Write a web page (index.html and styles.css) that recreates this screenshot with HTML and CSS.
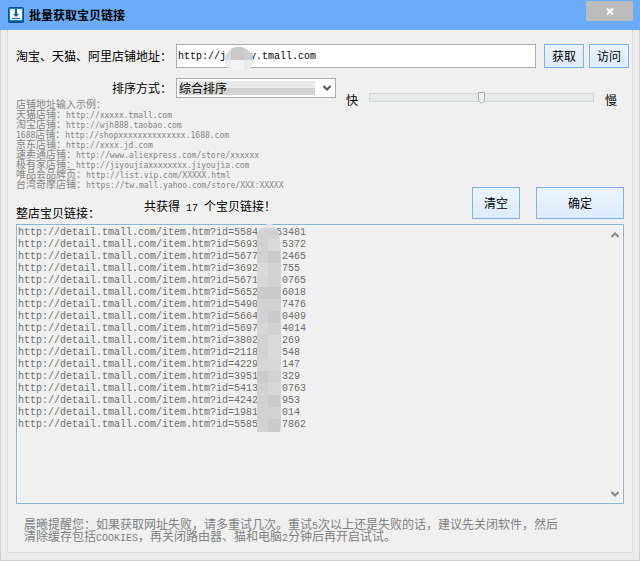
FILE: index.html
```html
<!DOCTYPE html>
<html lang="zh-CN">
<head>
<meta charset="utf-8">
<title>批量获取宝贝链接</title>
<link rel="stylesheet" href="styles.css">
</head>
<body>
<div class="window">
  <header class="titlebar">
    <svg class="logo" viewBox="0 0 16 16" aria-hidden="true">
      <rect width="16" height="16" rx="2" fill="#0b4f92"/>
      <rect x="1" y="1" width="14" height="13" rx="1" fill="#1a7fcb"/>
      <rect x="2" y="2" width="12" height="11" rx="1" fill="#f4fafd"/>
      <path d="M7 2h2v5h2l-3 3-3-3h2z" fill="#0d5ea6"/>
      <path d="M4 11h8v1H4z" fill="#0d5ea6"/>
    </svg>
    <h1 class="title">批量获取宝贝链接</h1>
    <button class="close" type="button" aria-label="关闭">
      <svg viewBox="0 0 8 7" width="8" height="7" aria-hidden="true"><path d="M1 0.5l6 6M7 0.5l-6 6" stroke="#fff" stroke-width="2"/></svg>
    </button>
  </header>

  <main class="panel">
    <div class="row address">
      <label class="field-label" for="shop">淘宝、天猫、阿里店铺地址：</label>
      <div class="shop-box">
        <input class="shop mono" id="shop" type="text" value="http://j    y.tmall.com">
        <svg class="mask-round" viewBox="0 0 28 25" width="28" height="25" aria-hidden="true">
          <ellipse cx="14" cy="12.5" rx="14" ry="12.5" fill="#dadada"/>
          <path d="M6 2Q14 -2 19 1V13H6z" fill="#c9c9c9"/>
          <path d="M19 1Q27 5 28 13H19z" fill="#cfcfcf"/>
          <path d="M0 13H28Q27 25 14 25T0 13z" fill="#ececec"/>
          <path d="M6 13h13v11q-7 2-13-1z" fill="#f3f3f3"/>
        </svg>
      </div>
      <button class="btn small" type="button">获取</button>
      <button class="btn small" type="button">访问</button>
    </div>

    <div class="middle">
      <div class="left">
        <div class="row">
          <label class="field-label" for="sort">排序方式：</label>
          <div class="sort-box">
            <select class="sort" id="sort"><option>综合排序</option></select>
            <svg class="sort-arrow" viewBox="0 0 8 6" width="8" height="6" aria-hidden="true"><path d="M0.5 1L4 4.5 7.5 1" fill="none" stroke="#555" stroke-width="2"/></svg>
          </div>
        </div>
        <div class="hints">
          <div>店铺地址输入示例：</div>
          <div>天猫店铺：<span class="mono">http://xxxxx.tmall.com</span></div>
          <div>淘宝店铺：<span class="mono">http://wjh888.taobao.com</span></div>
          <div><span class="mono">1688</span>店铺：<span class="mono">http://shopxxxxxxxxxxxxxx.1688.com</span></div>
          <div>京东店铺：<span class="mono">http://xxxx.jd.com</span></div>
          <div>速卖通店铺：<span class="mono">http://www.aliexpress.com/store/xxxxxx</span></div>
          <div>极有家店铺：<span class="mono">http://jiyoujiaxxxxxxxx.jiyoujia.com</span></div>
          <div>唯品会品牌页：<span class="mono">http://list.vip.com/XXXXX.html</span></div>
          <div>台湾奇摩店铺：<span class="mono">https://tw.mall.yahoo.com/store/XXX:XXXXX</span></div>
        </div>
        <div class="summary">
          <label class="list-label" for="links">整店宝贝链接：</label>
          <output class="count">共获得<span class="mono"> 17 </span>个宝贝链接！</output>
        </div>
      </div>

      <div class="right">
        <div class="speed">
          <span>快</span>
          <input class="slider" type="range" min="0" max="100" value="50" aria-label="速度">
          <span>慢</span>
        </div>
        <div class="actions">
          <button class="btn clear" type="button">清空</button>
          <button class="btn ok" type="button">确定</button>
        </div>
      </div>
    </div>

    <div class="links-box">
      <textarea class="links mono" id="links" spellcheck="false">http://detail.tmall.com/item.htm?id=5584   53481
http://detail.tmall.com/item.htm?id=5693    5372
http://detail.tmall.com/item.htm?id=5677    2465
http://detail.tmall.com/item.htm?id=3692    755
http://detail.tmall.com/item.htm?id=5671    0765
http://detail.tmall.com/item.htm?id=5652    6018
http://detail.tmall.com/item.htm?id=5490    7476
http://detail.tmall.com/item.htm?id=5664    0409
http://detail.tmall.com/item.htm?id=5697    4014
http://detail.tmall.com/item.htm?id=3802    269
http://detail.tmall.com/item.htm?id=2118    548
http://detail.tmall.com/item.htm?id=4229    147
http://detail.tmall.com/item.htm?id=3951    329
http://detail.tmall.com/item.htm?id=5413    0763
http://detail.tmall.com/item.htm?id=4242    953
http://detail.tmall.com/item.htm?id=1981    014
http://detail.tmall.com/item.htm?id=5585    7862</textarea>
      <div class="scroll">
        <button class="arrow" type="button" aria-label="向上"><svg viewBox="0 0 8 6" width="8" height="6" aria-hidden="true"><path d="M0.5 5L4 1.5 7.5 5" fill="none" stroke="#858585" stroke-width="2"/></svg></button>
        <button class="arrow" type="button" aria-label="向下"><svg viewBox="0 0 8 6" width="8" height="6" aria-hidden="true"><path d="M0.5 1L4 4.5 7.5 1" fill="none" stroke="#858585" stroke-width="2"/></svg></button>
      </div>
      <svg class="mask-strip" viewBox="0 0 24 207" width="24" height="207" aria-hidden="true">
        <path d="M0 9Q1 3 7 3H17Q21 3 22 9L24 26V200L23 207H0z" fill="#d2d2d2"/>
        <path d="M10 -1h5l4 4H6z" fill="#e2e8ee"/>
        <path d="M11 14h12v12H11zM0 38h11v12H0zM11 110h12v14H11zM11 122h12v12H11z" fill="#dadada"/>
        <path d="M11 26h12v12H11zM0 62h24v12H0zM11 86h12v12H11zM0 146h11v12H0zM11 170h12v12H11zM11 194h12v13H11z" fill="#cbcbcb"/>
        <path d="M0 50h11v12H0zM0 98h11v12H0zM0 134h24v12H0zM11 158h12v12H11z" fill="#d7d7d7"/>
      </svg>
    </div>

    <p class="tip">晨曦提醒您：如果获取网址失败，请多重试几次。重试<span class="mono">5</span>次以上还是失败的话，建议先关闭软件，然后<br>清除缓存包括<span class="mono">COOKIES</span>，再关闭路由器、猫和电脑<span class="mono">2</span>分钟后再开启试试。</p>
  </main>
</div>
</body>
</html>
```
FILE: styles.css
```css
* { box-sizing: border-box; }

body {
  margin: 0;
  font: 12px/12px "Noto Sans CJK SC", sans-serif;
  color: #000;
}

button, input, select, textarea {
  margin: 0;
  font: inherit;
  color: inherit;
  border-radius: 0;
}

.mono {
  font-family: "Liberation Mono", "Noto Sans CJK SC", monospace;
  font-size: 10px;
  white-space: pre;
}

span.mono { line-height: 0; }

.window {
  display: flex;
  flex-direction: column;
  min-height: 100vh;
  background: #ebebeb;
  border: 1px solid #d0d0d0;
  border-top: 0;
}

.titlebar {
  display: flex;
  align-items: center;
  gap: 5px;
  height: 30px;
  margin: 0 -1px;
  padding: 0 7px 0 8px;
  background: #6aacf8;
}

.logo { width: 16px; height: 16px; }

.title {
  flex: 1;
  margin: 0;
  font-size: 12px;
  font-weight: 700;
}

.close {
  display: flex;
  align-items: center;
  justify-content: center;
  align-self: flex-start;
  width: 47px;
  height: 20px;
  margin-top: 1px;
  padding: 0;
  border: 0;
  background: #bcbcbc;
}

.panel {
  flex: 1;
  display: flex;
  flex-direction: column;
  margin: 0 6px 7px;
  padding: 14px 8px 10px;
  background: #f0f0f0;
  border: 1px solid #d9d9d9;
  border-top: 0;
}

.row { display: flex; align-items: center; }

.address { margin-right: -5px; }

.field-label {
  flex: none;
  width: 160px;
  padding-right: 4px;
  text-align: right;
}

.shop-box { position: relative; flex: 1; margin-right: 8px; }

.shop {
  display: block;
  width: 100%;
  height: 24px;
  padding: 0 1px;
  border: 1px solid #abadb3;
  background: #fff;
}

.mask-round { position: absolute; left: 49px; top: 3px; }

.btn {
  padding: 0;
  border: 1px solid #7eb4ea;
  background: linear-gradient(#ecf4fc, #dcecfc);
}

.small { width: 40px; height: 24px; }
.small + .small { margin-left: 5px; }

.middle { display: flex; margin-top: 10px; }

.left { flex: none; width: 320px; }

.sort-box { position: relative; flex: 1; }

.sort {
  display: block;
  appearance: none;
  width: 100%;
  height: 20px;
  padding: 0 20px 0 2px;
  border: 1px solid #abadb3;
  background: linear-gradient(#e9e9e9 50%, #d2d2d2 50%) 2px 2px / calc(100% - 22px) 14px no-repeat #fff;
}

.sort-arrow { position: absolute; right: 5px; top: 7px; }

.hints {
  margin-top: 1px;
  font-size: 10px;
  line-height: 10px;
  color: #858585;
  white-space: nowrap;
}

.hints div { height: 10px; }
.hints .mono { font-family: "DejaVu Sans Mono", monospace; font-size: 8px; }

.summary {
  display: flex;
  gap: 44px;
  height: 19px;
  margin-top: 11px;
}

.list-label { align-self: flex-end; }

.right {
  flex: 1;
  display: flex;
  flex-direction: column;
  justify-content: space-between;
}

.speed {
  display: flex;
  gap: 11px;
  padding: 16px 7px 0 10px;
}

.slider {
  flex: 1;
  min-width: 0;
  height: 13px;
  margin-top: -3px;
  appearance: none;
  background: none;
}

.slider::-webkit-slider-runnable-track {
  height: 9px;
  border: 1px solid #d6d6d6;
  background: #e7eaea;
}

.slider::-webkit-slider-thumb {
  appearance: none;
  width: 7px;
  height: 12px;
  margin-top: -2px;
  background: url("data:image/svg+xml,%3Csvg xmlns='http://www.w3.org/2000/svg' viewBox='0 0 7 12'%3E%3Cpath d='M.5.5h6v8l-3 3-3-3z' fill='%23f0f0f0' stroke='%23ababab'/%3E%3C/svg%3E") no-repeat;
}

.actions {
  display: flex;
  justify-content: flex-end;
  gap: 16px;
}

.clear { width: 48px; height: 32px; }
.ok { width: 88px; height: 32px; }

.links-box {
  position: relative;
  flex: 1;
  display: flex;
  min-height: 220px;
  margin-top: 5px;
  border: 1px solid #7eb4ea;
  outline: 1px solid #fff;
  outline-offset: -2px;
}

.links {
  flex: 1;
  min-width: 0;
  padding: 2px 1px;
  line-height: 12px;
  color: #6d6d6d;
  border: 0;
  background: transparent;
  resize: none;
  overflow: hidden;
}

.scroll {
  display: flex;
  flex-direction: column;
  justify-content: space-between;
  width: 17px;
}

.arrow {
  display: flex;
  align-items: center;
  justify-content: center;
  height: 19px;
  padding: 0;
  border: 0;
  background: transparent;
}

.mask-strip { position: absolute; left: 240px; top: 0; overflow: visible; }

.tip {
  margin: 14px 0 0;
  padding-left: 8px;
  color: #808080;
}
```
